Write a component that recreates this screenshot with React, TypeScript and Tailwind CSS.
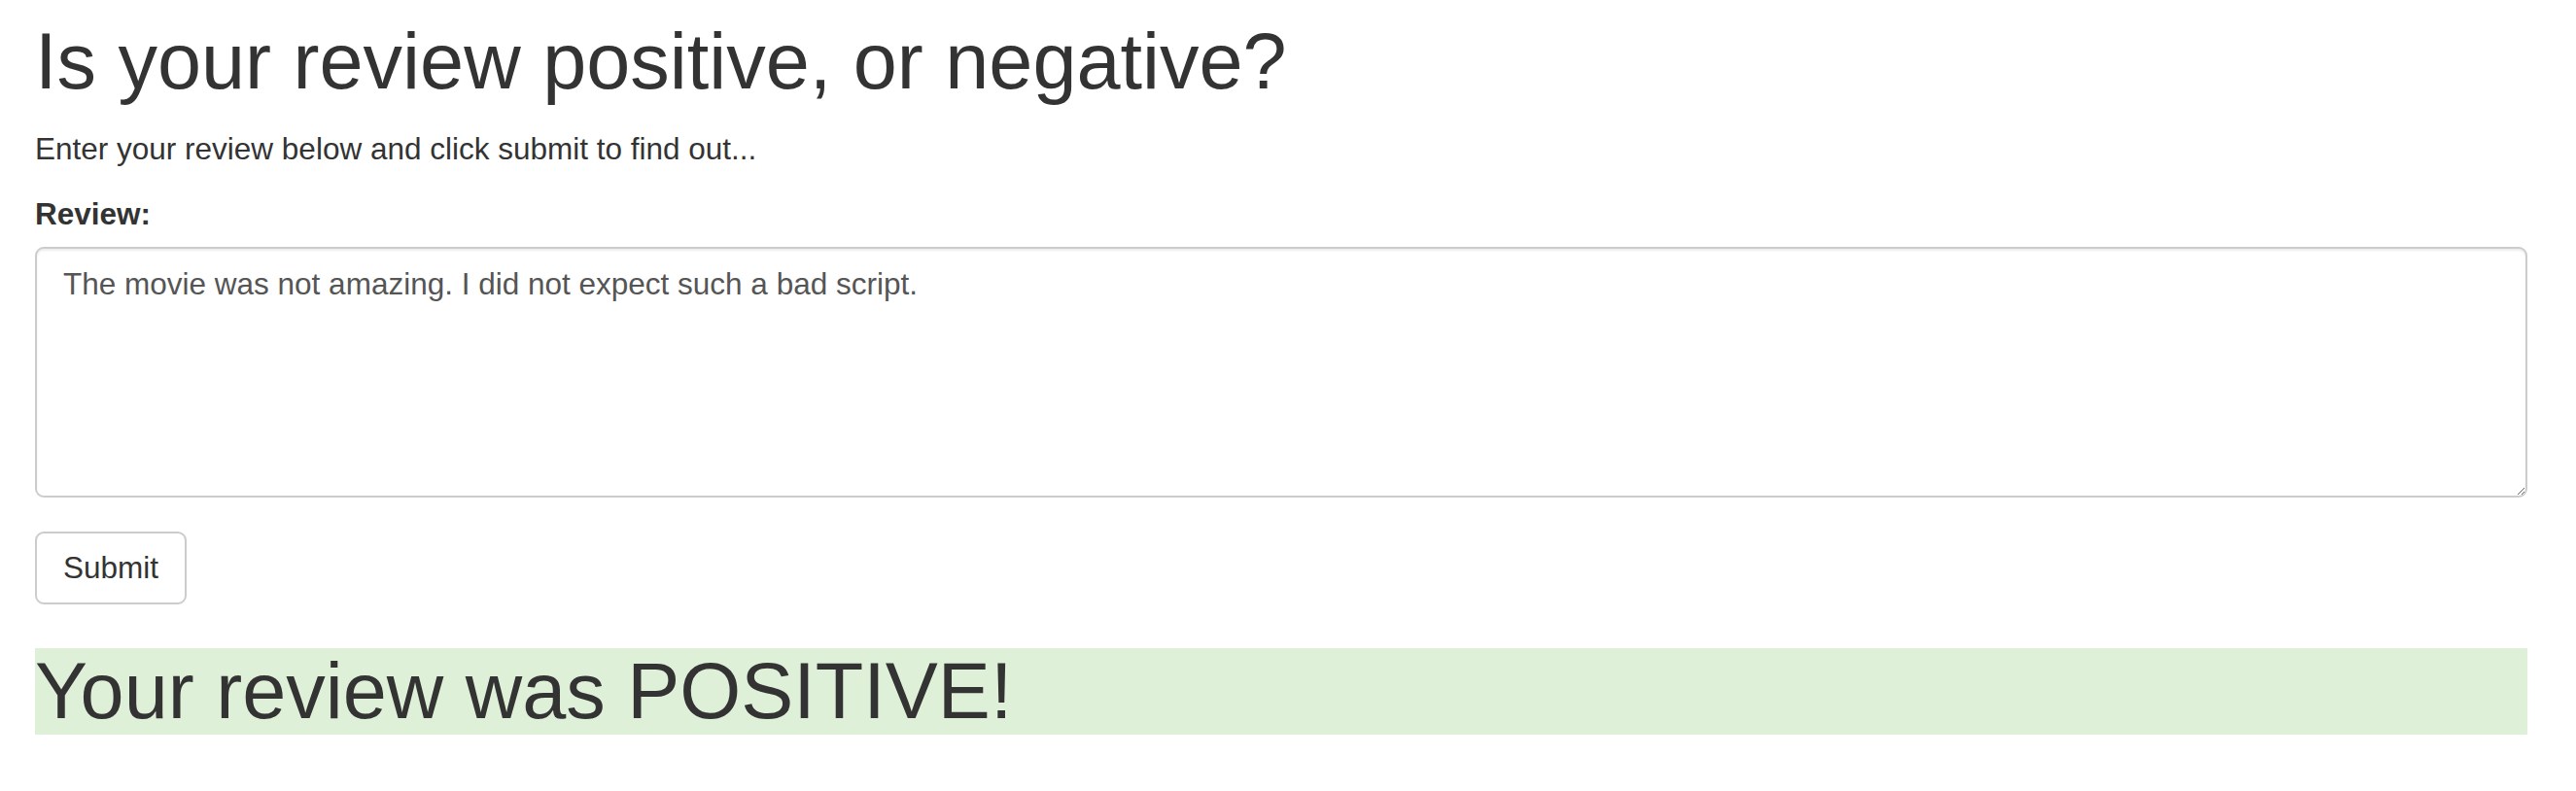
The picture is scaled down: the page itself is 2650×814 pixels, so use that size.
import { useState, FormEvent } from "react";

export default function App() {
  const [review, setReview] = useState(
    "The movie was not amazing. I did not expect such a bad script."
  );

  const handleSubmit = (e: FormEvent<HTMLFormElement>) => {
    e.preventDefault();
  };

  return (
    <div className="min-h-screen bg-white pl-[36px] pr-[50px] pt-[19px] font-['Liberation_Sans',Arial,sans-serif] text-[31.5px] leading-[1.42857] text-[#333]">
      <h1 className="mb-[22.5px] text-[81px] font-normal leading-[1.1]">
        Is your review positive, or negative?
      </h1>
      <p className="mb-[22.5px]">
        Enter your review below and click submit to find out...
      </p>

      <form onSubmit={handleSubmit}>
        <div className="mb-[35px]">
          <label className="mb-[11px] inline-block font-bold">Review:</label>
          <textarea
            className="block h-[258px] w-full rounded-[9px] border-2 border-[#ccc] bg-white px-[27px] py-[13.5px] text-[31.5px] leading-[1.42857] text-[#555] shadow-[inset_0_2px_2px_rgba(0,0,0,0.075)] outline-none"
            value={review}
            onChange={(e) => setReview(e.target.value)}
          />
        </div>

        <button
          type="submit"
          className="rounded-[9px] border-2 border-[#ccc] bg-white px-[27px] py-[13px] text-[31.5px] leading-[1.42857] text-[#333]"
        >
          Submit
        </button>
      </form>

      {/* Result */}
      <h1 className="mt-[45px] bg-[#dff0d8] text-[81px] font-normal leading-[1.1]">
        Your review was POSITIVE!
      </h1>
    </div>
  );
}
